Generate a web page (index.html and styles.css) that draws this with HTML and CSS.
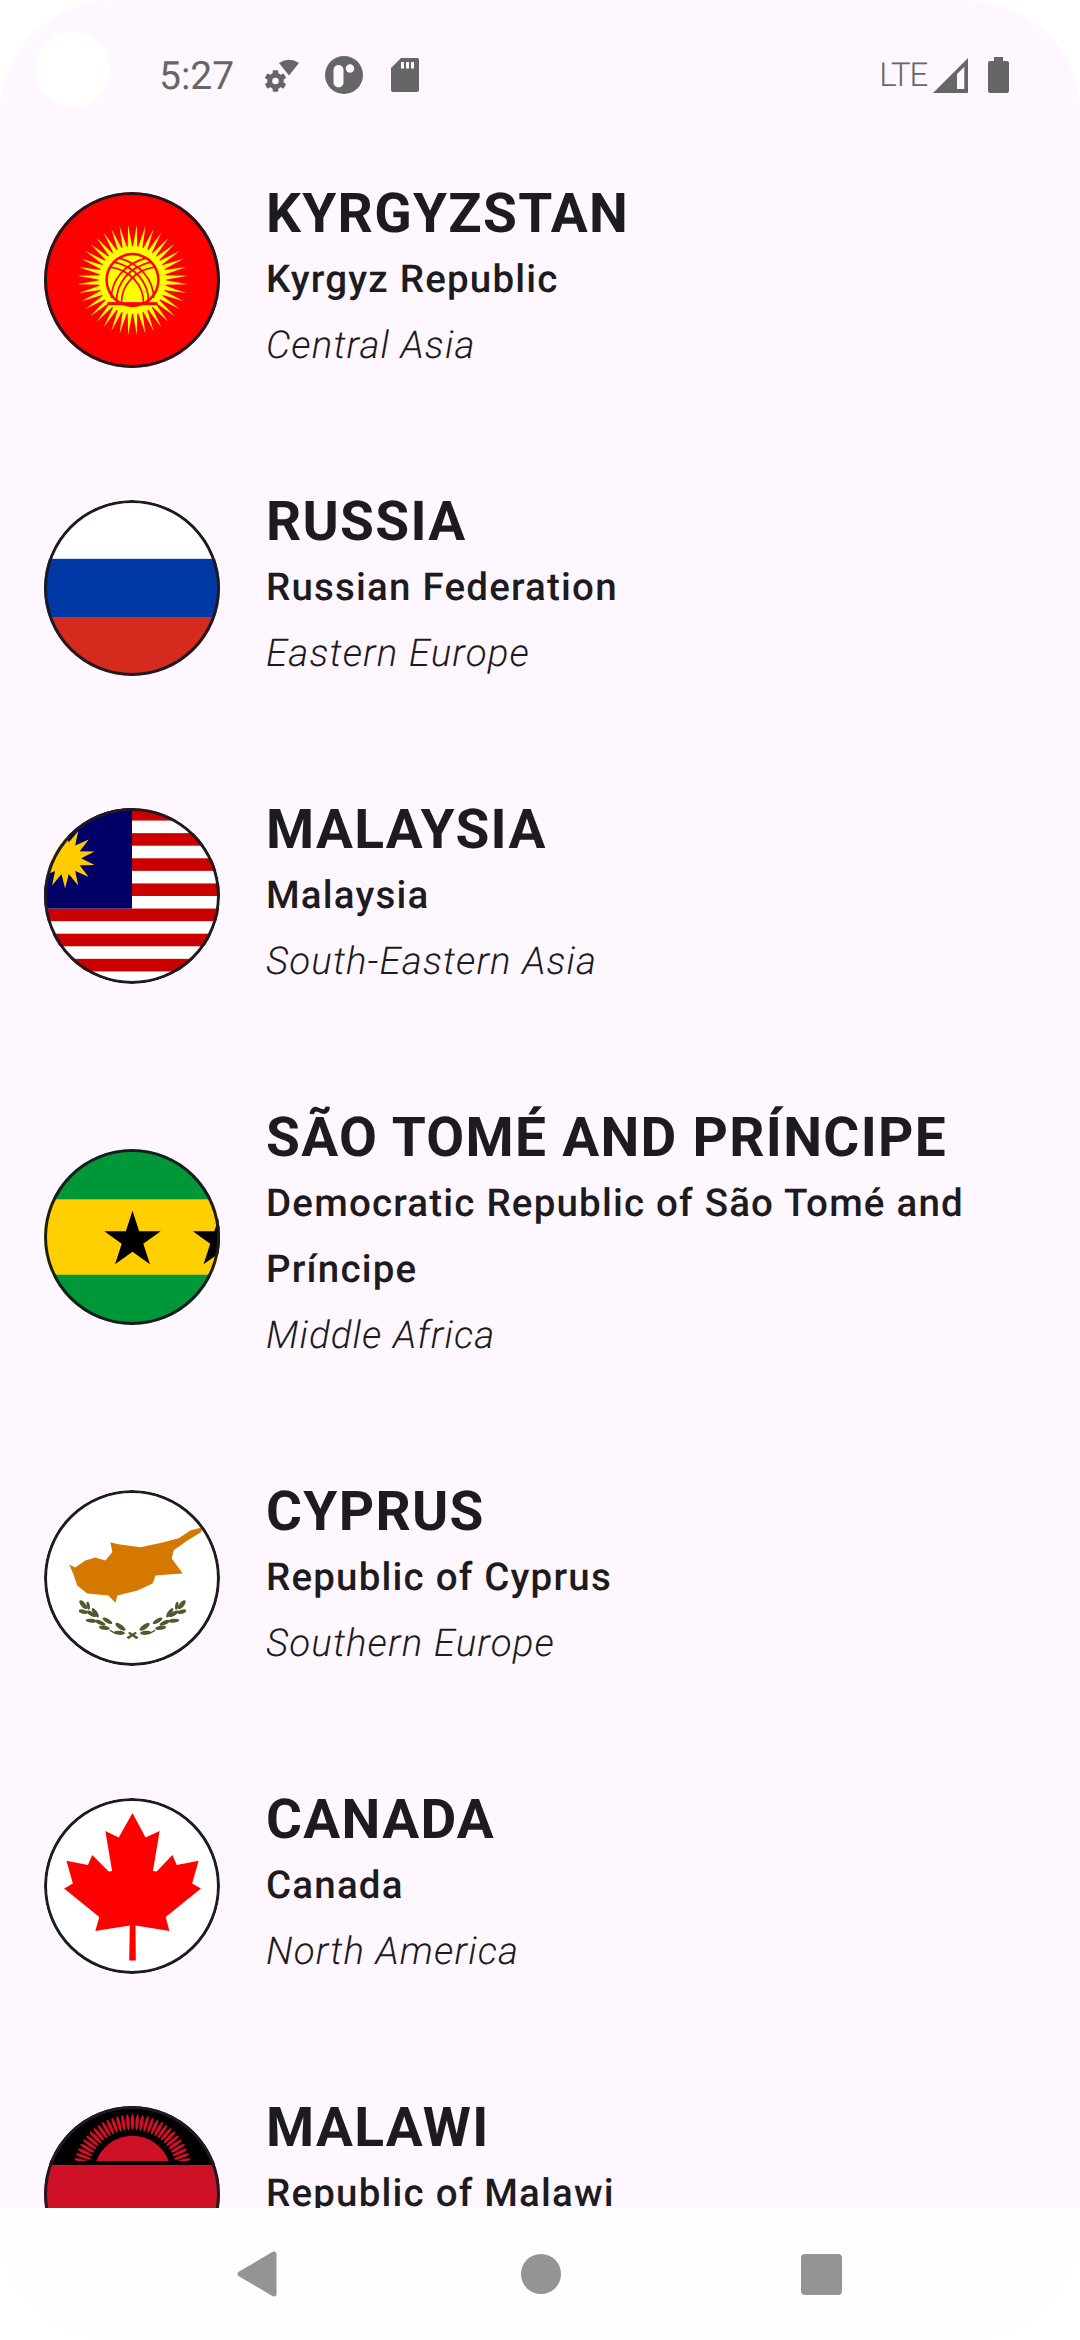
FILE: index.html
```html
<!DOCTYPE html>
<html lang="en">
<head>
<meta charset="utf-8">
<title>Countries</title>
<link rel="stylesheet" href="styles.css">
</head>
<body>
<div class="screen">
  <header class="status">
    <span class="camera"></span>
    <span class="time">5:27</span>
    <div class="status-icons">
      <svg class="ic-gear" viewBox="0 0 34 33" width="34" height="33">
        <path class="ic" d="M14 4 Q24 -2.500 34 4 L24 16.500 Z"/>
        <g transform="translate(10.500 22)">
          <circle class="gear-body" r="5.800"/>
          <g class="ic">
            <rect x="-2.800" y="-10.800" width="5.600" height="5" rx="1"/>
            <rect x="-2.800" y="-10.800" width="5.600" height="5" rx="1" transform="rotate(60)"/>
            <rect x="-2.800" y="-10.800" width="5.600" height="5" rx="1" transform="rotate(120)"/>
            <rect x="-2.800" y="-10.800" width="5.600" height="5" rx="1" transform="rotate(180)"/>
            <rect x="-2.800" y="-10.800" width="5.600" height="5" rx="1" transform="rotate(240)"/>
            <rect x="-2.800" y="-10.800" width="5.600" height="5" rx="1" transform="rotate(300)"/>
          </g>
        </g>
      </svg>
      <svg class="ic-circle" viewBox="0 0 38 38" width="38" height="38">
        <circle class="ic" cx="19" cy="19" r="19"/>
        <rect class="ic-hole" x="8.500" y="9" width="10" height="22.500" rx="5"/>
        <circle class="ic-hole" cx="25" cy="12.500" r="4.200"/>
      </svg>
      <svg class="ic-sd" viewBox="0 0 28 34" width="28" height="34">
        <path class="ic" d="M10 0 H26 Q28 0 28 2 V32 Q28 34 26 34 H2 Q0 34 0 32 V10 Z"/>
        <rect class="ic-hole" x="10" y="4" width="3" height="6.500"/>
        <rect class="ic-hole" x="15" y="4" width="3" height="6.500"/>
        <rect class="ic-hole" x="20" y="4" width="3" height="6.500"/>
      </svg>
    </div>
    <div class="status-right">
      <span class="lte">LTE</span>
      <svg class="ic-signal" viewBox="0 0 35 35" width="35" height="35">
        <path class="ic" fill-rule="evenodd" d="M35 0 V35 H0 Z M24 16 V31 H31.300 V8.700 Z"/>
      </svg>
      <svg class="ic-battery" viewBox="0 0 21 36" width="21" height="36">
        <path class="ic" d="M6 0 H15 V4 H19 Q21 4 21 6 V34 Q21 36 19 36 H2 Q0 36 0 34 V6 Q0 4 2 4 H6 Z"/>
      </svg>
    </div>
  </header>

  <main class="list">
    <article class="row">
      <svg class="flag" viewBox="0 0 175 175" width="176" height="176">
        <defs>
          <polygon id="ky-ray" points="0,-55 2.400,-31 -2.400,-31"/>
          <g id="ky-five">
            <use href="#ky-ray"/>
            <use href="#ky-ray" transform="rotate(9)"/>
            <use href="#ky-ray" transform="rotate(18)"/>
            <use href="#ky-ray" transform="rotate(27)"/>
            <use href="#ky-ray" transform="rotate(36)"/>
          </g>
        </defs>
        <rect width="175" height="175" fill="#ff0000"/>
        <g transform="translate(88 87.500)">
          <g fill="#ffff00">
            <use href="#ky-five" transform="rotate(4.500)"/>
            <use href="#ky-five" transform="rotate(49.500)"/>
            <use href="#ky-five" transform="rotate(94.500)"/>
            <use href="#ky-five" transform="rotate(139.500)"/>
            <use href="#ky-five" transform="rotate(184.500)"/>
            <use href="#ky-five" transform="rotate(229.500)"/>
            <use href="#ky-five" transform="rotate(274.500)"/>
            <use href="#ky-five" transform="rotate(319.500)"/>
          </g>
          <circle r="33.500" fill="#ffff00"/>
          <circle r="27" fill="#ff0000"/>
          <circle r="24.500" fill="#ffff00"/>
          <g fill="none" stroke="#ff0000" stroke-width="1.700">
            <path d="M-21 18 C-21 0 -8 -16 14 -22"/>
            <path d="M-16 22 C-16 2 -3 -13 19 -18"/>
            <path d="M-11 23 C-11 5 2 -10 23 -13"/>
            <path d="M21 18 C21 0 8 -16 -14 -22"/>
            <path d="M16 22 C16 2 3 -13 -19 -18"/>
            <path d="M11 23 C11 5 -2 -10 -23 -13"/>
          </g>
          <rect x="-25" y="22" width="50" height="3" fill="#ff0000"/>
        </g>
        <circle class="ring" cx="87.500" cy="87.500" r="86"/>
      </svg>
      <div class="info">
        <h2 class="name">KYRGYZSTAN</h2>
        <p class="official">Kyrgyz Republic</p>
        <p class="region">Central Asia</p>
      </div>
    </article>

    <article class="row">
      <svg class="flag" viewBox="0 0 175 175" width="176" height="176">
        <rect width="175" height="59" fill="#ffffff"/>
        <rect y="58.500" width="175" height="58.500" fill="#0039a6"/>
        <rect y="116.500" width="175" height="59" fill="#d52b1e"/>
        <circle class="ring" cx="87.500" cy="87.500" r="86"/>
      </svg>
      <div class="info">
        <h2 class="name">RUSSIA</h2>
        <p class="official">Russian Federation</p>
        <p class="region">Eastern Europe</p>
      </div>
    </article>

    <article class="row">
      <svg class="flag" viewBox="0 0 175 175" width="176" height="176">
        <defs>
          <polygon id="my-ray" points="0,-30 5,-10 -5,-10"/>
        </defs>
        <rect width="175" height="175" fill="#ffffff"/>
        <g fill="#cc0001">
          <rect width="175" height="12.500"/>
          <rect y="25" width="175" height="12.500"/>
          <rect y="50" width="175" height="12.500"/>
          <rect y="75" width="175" height="12.500"/>
          <rect y="100" width="175" height="12.500"/>
          <rect y="125" width="175" height="12.500"/>
          <rect y="150" width="175" height="12.500"/>
        </g>
        <rect width="87.500" height="100" fill="#010066"/>
        <g transform="translate(21 50)" fill="#ffcc00">
          <circle r="11.500"/>
          <use href="#my-ray" transform="rotate(180)"/>
          <use href="#my-ray" transform="rotate(154.300)"/>
          <use href="#my-ray" transform="rotate(128.600)"/>
          <use href="#my-ray" transform="rotate(102.900)"/>
          <use href="#my-ray" transform="rotate(77.100)"/>
          <use href="#my-ray" transform="rotate(51.400)"/>
          <use href="#my-ray" transform="rotate(25.700)"/>
          <use href="#my-ray"/>
          <use href="#my-ray" transform="rotate(-25.700)"/>
          <use href="#my-ray" transform="rotate(-51.400)"/>
          <use href="#my-ray" transform="rotate(-77.100)"/>
          <use href="#my-ray" transform="rotate(-102.900)"/>
          <use href="#my-ray" transform="rotate(-128.600)"/>
          <use href="#my-ray" transform="rotate(-154.300)"/>
        </g>
        <path d="M24 28 C16 36 8 50 6 62" fill="none" stroke="#ffcc00" stroke-width="1.400"/>
        <circle class="ring" cx="87.500" cy="87.500" r="86"/>
      </svg>
      <div class="info">
        <h2 class="name">MALAYSIA</h2>
        <p class="official">Malaysia</p>
        <p class="region">South-Eastern Asia</p>
      </div>
    </article>

    <article class="row">
      <svg class="flag" viewBox="0 0 175 175" width="176" height="176">
        <defs>
          <polygon id="st-star" points="0,-29.500 6.620,-9.120 28.060,-9.120 10.720,3.480 17.340,23.870 0,11.270 -17.340,23.870 -10.720,3.480 -28.060,-9.120 -6.620,-9.120"/>
        </defs>
        <rect width="175" height="175" fill="#009739"/>
        <rect y="50" width="175" height="75" fill="#ffcf00"/>
        <use href="#st-star" x="88" y="90.800"/>
        <use href="#st-star" x="176" y="90.800"/>
        <circle class="ring" cx="87.500" cy="87.500" r="86"/>
      </svg>
      <div class="info">
        <h2 class="name">SÃO TOMÉ AND PRÍNCIPE</h2>
        <p class="official">Democratic Republic of São Tomé and Príncipe</p>
        <p class="region">Middle Africa</p>
      </div>
    </article>

    <article class="row">
      <svg class="flag" viewBox="0 0 175 175" width="176" height="176">
        <defs>
          <g id="cy-branch" fill="#4e5b31">
            <ellipse rx="6" ry="2.300" transform="translate(76 136) rotate(35)"/>
            <ellipse rx="5.500" ry="2" transform="translate(60 137) rotate(8)"/>
            <ellipse rx="5.500" ry="2" transform="translate(75 142) rotate(5)"/>
            <ellipse rx="5.500" ry="2" transform="translate(63 130) rotate(30)"/>
            <ellipse rx="5.500" ry="2" transform="translate(56 132) rotate(25)"/>
            <ellipse rx="5.500" ry="2" transform="translate(47 130) rotate(5)"/>
            <ellipse rx="5.500" ry="2" transform="translate(47 123) rotate(30)"/>
            <ellipse rx="5.500" ry="2" transform="translate(51 122) rotate(55)"/>
            <ellipse rx="5.500" ry="2.300" transform="translate(39 114) rotate(50)"/>
            <ellipse rx="4" ry="1.600" transform="translate(44 115) rotate(80)"/>
            <ellipse rx="4.500" ry="2" transform="translate(39 121) rotate(15)"/>
            <path d="M82 146.500 L91 141 L92.500 142.500 L84 148.500 Z"/>
            <path d="M66 139 L72 142.500 L71 143.500 L65 140 Z"/>
          </g>
        </defs>
        <rect width="175" height="175" fill="#ffffff"/>
        <path fill="#d57800" d="M25 74 L31 77 L41 70 L51 67 L61 70 L68 62 L66 52 L74 54 L96 57 L119 52 L134 48 L146 40 L158 37 L156 42 L143 50 L129 60 L127 68 L138 83 L123 84 L111 85 L108 93 L93 100 L73 105 L71 112 L64 105 L43 103 L33 95 L29 83 Z"/>
        <use href="#cy-branch"/>
        <use href="#cy-branch" transform="translate(176 0) scale(-1 1)"/>
        <circle class="ring" cx="87.500" cy="87.500" r="86"/>
      </svg>
      <div class="info">
        <h2 class="name">CYPRUS</h2>
        <p class="official">Republic of Cyprus</p>
        <p class="region">Southern Europe</p>
      </div>
    </article>

    <article class="row">
      <svg class="flag" viewBox="0 0 175 175" width="176" height="176">
        <rect width="175" height="175" fill="#ffffff"/>
        <polygon fill="#ff0000" points="88,15 101,39.300 115,32.700 108.300,72.700 112,73 127.700,56.700 132,66.700 153.700,62.300 147.300,85 156,90 121,118.300 124.700,132.300 91,126.700 91.300,161.700 84.700,161.700 85.300,126.700 51,132.300 55,118.300 20,90 28.700,85 22.300,62.300 43.700,66.700 48,56.700 64.300,73 67.700,72.700 61,32.700 74.300,39.300"/>
        <circle class="ring" cx="87.500" cy="87.500" r="86"/>
      </svg>
      <div class="info">
        <h2 class="name">CANADA</h2>
        <p class="official">Canada</p>
        <p class="region">North America</p>
      </div>
    </article>

    <article class="row">
      <svg class="flag" viewBox="0 0 175 175" width="176" height="176">
        <defs>
          <ellipse id="mw-ray" cx="0" cy="-52" rx="1.700" ry="8"/>
          <g id="mw-five">
            <use href="#mw-ray" transform="rotate(-10)"/>
            <use href="#mw-ray" transform="rotate(-5)"/>
            <use href="#mw-ray"/>
            <use href="#mw-ray" transform="rotate(5)"/>
            <use href="#mw-ray" transform="rotate(10)"/>
          </g>
        </defs>
        <rect width="175" height="58.500" fill="#000000"/>
        <rect y="58.500" width="175" height="58.500" fill="#ce1126"/>
        <rect y="117" width="175" height="58" fill="#339e35"/>
        <g transform="translate(88 68)" fill="#ce1126">
          <use href="#mw-five"/>
          <use href="#mw-five" transform="rotate(-25)"/>
          <use href="#mw-five" transform="rotate(25)"/>
          <use href="#mw-five" transform="rotate(-50)"/>
          <use href="#mw-five" transform="rotate(50)"/>
          <use href="#mw-ray" transform="rotate(-65)"/>
          <use href="#mw-ray" transform="rotate(65)"/>
          <use href="#mw-ray" transform="rotate(-70)"/>
          <use href="#mw-ray" transform="rotate(70)"/>
          <use href="#mw-ray" transform="rotate(-75)"/>
          <use href="#mw-ray" transform="rotate(75)"/>
        </g>
        <rect y="54.700" width="175" height="3.800" fill="#000000"/>
        <path fill="#ce1126" d="M52 54.700 A38.400 38.400 0 0 1 124 54.700 Z"/>
        <circle class="ring" cx="87.500" cy="87.500" r="86"/>
      </svg>
      <div class="info">
        <h2 class="name">MALAWI</h2>
        <p class="official">Republic of Malawi</p>
        <p class="region">Eastern Africa</p>
      </div>
    </article>
  </main>

  <nav class="navbar">
    <svg class="nav-back" viewBox="0 0 40 46" width="40" height="46">
      <path class="nav-fill" d="M37 3 L37 43 L3 23 Z" />
    </svg>
    <span class="nav-home"></span>
    <span class="nav-recent"></span>
  </nav>
</div>
</body>
</html>
```

FILE: styles.css
```css
* { box-sizing: border-box; }
html, body { margin: 0; padding: 0; background: #ffffff; }
body { width: 1080px; height: 2340px; overflow: hidden; font-family: Roboto, "Liberation Sans", sans-serif; color: #1d1b20; text-rendering: geometricPrecision; }
.screen { position: relative; width: 1080px; height: 2340px; display: flex; flex-direction: column; background: #ffffff; overflow: hidden; }

.status { flex: 0 0 126px; display: flex; align-items: flex-start; padding: 57px 71px 0 159px; color: #666666; background: #fef7ff; border-radius: 117px 117px 0 0 / 110px 110px 0 0; }
.camera { position: absolute; left: 34.5px; top: 32px; width: 75px; height: 75px; border-radius: 50%; background: #ffffff; }
.time { font-size: 39px; line-height: 38px; font-weight: 400; width: 72px; white-space: nowrap; }
.status-icons { display: flex; align-items: flex-start; margin-left: 34px; }
.ic-gear { margin-top: 2px; }
.ic-circle { margin-left: 26px; margin-top: -1px; }
.ic-sd { margin-left: 28px; margin-top: 1px; }
.status-right { margin-left: auto; display: flex; align-items: flex-start; }
.lte { font-size: 33px; line-height: 38px; font-weight: 350; letter-spacing: -1.2px; margin-right: 6px; }
.ic-signal { margin-top: 1px; }
.ic-battery { margin-left: 20px; }
.ic { fill: #666666; }
.ic-hole { fill: #fef7ff; }
.gear-body { fill: none; stroke: #666666; stroke-width: 5px; }

.list { flex: 1 1 0; min-height: 0; overflow: hidden; background: #fef7ff; }
.row { display: flex; align-items: center; gap: 46px; padding: 55px 44px; }
.flag { flex: 0 0 176px; display: block; border-radius: 50%; overflow: hidden; }
.ring { fill: none; stroke: #1d1b20; stroke-width: 3px; }
.info { flex: 1 1 0; min-width: 0; }
.name { margin: 0; font-size: 55px; line-height: 66px; font-weight: 700; letter-spacing: 1.3px; }
.official { margin: 0; font-size: 38.5px; line-height: 66px; font-weight: 500; letter-spacing: 1.2px; }
.region { margin: 0; font-size: 38.5px; line-height: 66px; font-weight: 300; font-style: italic; letter-spacing: 1.1px; }

.navbar { flex: 0 0 132px; display: flex; align-items: center; justify-content: center; background: #fefefe; border-radius: 0 0 110px 110px; }
.nav-back { margin-left: -2px; }
.nav-fill { fill: #949494; stroke: #949494; stroke-width: 5px; stroke-linejoin: round; }
.nav-home { width: 40px; height: 40px; border-radius: 50%; background: #949494; margin-left: 244px; }
.nav-recent { width: 41px; height: 41px; border-radius: 4px; background: #949494; margin-left: 240px; }
```
